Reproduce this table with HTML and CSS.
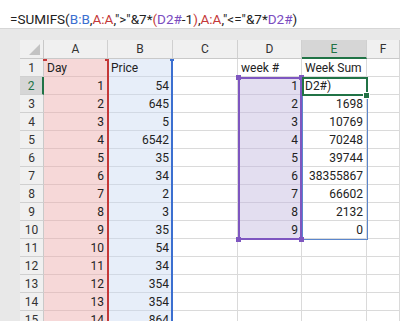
FILE: index.html
```html
<!DOCTYPE html>
<html lang="en">
<head>
  <meta charset="UTF-8">
  <title>SUMIFS</title>
  <link rel="stylesheet" href="styles.css">
</head>
<body>
  <div class="fbar">
    =SUMIFS(<span class="blue">B:B</span>,<span class="red">A:A</span>,"&gt;"&amp;7*<span class="red">(</span><span class="purple">D2#</span>-1<span class="red">)</span>,<span class="red">A:A</span>,"&lt;="&amp;7*<span class="purple">D2#</span>)
  </div>
  <div class="band"></div>

  <div class="sheet" id="sheet">
    <div class="strip"></div>
    <div class="corner"><span class="tri"></span></div>
    <div class="ch">A</div>
    <div class="ch">B</div>
    <div class="ch">C</div>
    <div class="ch">D</div>
    <div class="ch on">E</div>
    <div class="ch">F</div>

    <div class="ref-a"></div>
    <div class="mark red-mark" style="left:43px"></div>
    <div class="mark red-mark" style="left:105px"></div>
    <div class="ref-b"></div>
    <div class="mark blue-mark" style="left:170px"></div>
    <div class="spill"></div>
    <div class="ref-d"></div>
    <div class="knob" style="left:236px;top:35px"></div>
    <div class="knob" style="left:299px;top:35px"></div>
    <div class="knob" style="left:236px;top:197px"></div>
    <div class="knob" style="left:299px;top:197px"></div>
    <div class="active"></div>
    <div class="fill"></div>
  </div>

  <script>
    var a = ['Day', 1, 2, 3, 4, 5, 6, 7, 8, 9, 10, 11, 12, 13, 14];
    var b = ['Price', 54, 645, 5, 6542, 35, 34, 2, 3, 35, 54, 34, 354, 354, 864];
    var d = ['week #', 1, 2, 3, 4, 5, 6, 7, 8, 9];
    var e = ['Week Sum', 'D2#)', 1698, 10769, 70248, 39744, 38355867, 66602, 2132, 0];
    var sheet = document.getElementById('sheet');
    var first = sheet.querySelector('.ref-a');

    function cell(cls, val) {
      var div = document.createElement('div');
      div.className = 'c ' + cls;
      if (val !== undefined) {
        div.textContent = val;
        if (typeof val === 'string') div.className += ' txt';
      }
      sheet.insertBefore(div, first);
    }

    for (var i = 0; i < 15; i++) {
      var rh = document.createElement('div');
      rh.className = 'rh' + (i === 1 ? ' on' : '');
      rh.textContent = i + 1;
      sheet.insertBefore(rh, first);
      cell('pink', a[i]);
      cell('sky', b[i]);
      cell('', undefined);
      cell(i > 0 && i < 10 ? 'lilac' : '', d[i]);
      cell('', e[i]);
      cell('', undefined);
    }
  </script>
</body>
</html>
```

FILE: styles.css
```css
* {
  box-sizing: border-box;
}

body {
  margin: 0;
  background: #fff;
  font-family: Roboto, "Liberation Sans", sans-serif;
  overflow: hidden;
}

.fbar {
  height: 29px;
  padding: 11px 0 0 10px;
  font-size: 13.5px;
  line-height: 16px;
  color: #222;
  white-space: nowrap;
  border-bottom: 1px solid #d6d6d6;
}

.blue {
  color: #3b6fd0;
}

.red {
  color: #c43838;
}

.purple {
  color: #7a4cc0;
}

.band {
  height: 11px;
  background: #e8e8e8;
}

.sheet {
  position: relative;
  display: grid;
  grid-template-columns: 20px 24px 64px 65px 65px 64px 65px 1fr;
  grid-template-rows: 19px repeat(15, 18px);
  font-size: 12px;
  color: #222;
}

.strip {
  grid-row: 1 / 17;
  background: #e8e8e8;
}

.corner {
  position: relative;
  background: #f0f0f0;
  border-right: 1px solid #c9c9c9;
  border-bottom: 1px solid #c9c9c9;
}

.tri {
  position: absolute;
  right: 3px;
  bottom: 3px;
  width: 0;
  height: 0;
  border-left: 11px solid transparent;
  border-bottom: 11px solid #c3c3c3;
}

.ch {
  background: #f0f0f0;
  border-right: 1px solid #d0d0d0;
  border-bottom: 1px solid #c9c9c9;
  text-align: center;
  line-height: 18px;
  color: #333;
}

.ch.on {
  background: #d6d6d6;
  color: #217346;
  border-bottom: 2px solid #217346;
}

.rh {
  background: #f0f0f0;
  border-right: 1px solid #c9c9c9;
  border-bottom: 1px solid #d0d0d0;
  text-align: center;
  line-height: 18px;
  color: #333;
}

.rh.on {
  background: #d6d6d6;
  color: #217346;
  border-right: 2px solid #217346;
}

.c {
  border-right: 1px solid #dadada;
  border-bottom: 1px solid #dadada;
  text-align: right;
  padding: 0 3px;
  line-height: 18px;
  white-space: nowrap;
}

.c.txt {
  text-align: left;
  padding-left: 3px;
}

.pink {
  background: #f6d8d8;
  border-color: #e2c4c4;
}

.sky {
  background: #e7eef9;
  border-color: #d2d9e4;
}

.lilac {
  background: #e3def0;
  border-color: #cfc9dd;
}

.ref-a {
  position: absolute;
  left: 107px;
  top: 19px;
  bottom: 0;
  width: 2px;
  background: #c43838;
}

.ref-b {
  position: absolute;
  left: 171px;
  top: 19px;
  bottom: 0;
  width: 2px;
  background: #3b6fd0;
}

.mark {
  position: absolute;
  top: 19px;
  width: 4px;
  height: 2px;
}

.red-mark {
  background: #c43838;
}

.blue-mark {
  background: #3b6fd0;
}

.ref-d {
  position: absolute;
  left: 238px;
  top: 37px;
  width: 64px;
  height: 163px;
  border: 2px solid #7e56c0;
}

.knob {
  position: absolute;
  width: 5px;
  height: 5px;
  background: #7e56c0;
}

.spill {
  position: absolute;
  left: 302px;
  top: 37px;
  width: 66px;
  height: 163px;
  border: 1px solid #5b86cc;
}

.active {
  position: absolute;
  left: 302px;
  top: 37px;
  width: 66px;
  height: 19px;
  border: 2px solid #217346;
}

.fill {
  position: absolute;
  left: 364px;
  top: 53px;
  width: 5px;
  height: 5px;
  background: #217346;
  outline: 1px solid #fff;
}
```
